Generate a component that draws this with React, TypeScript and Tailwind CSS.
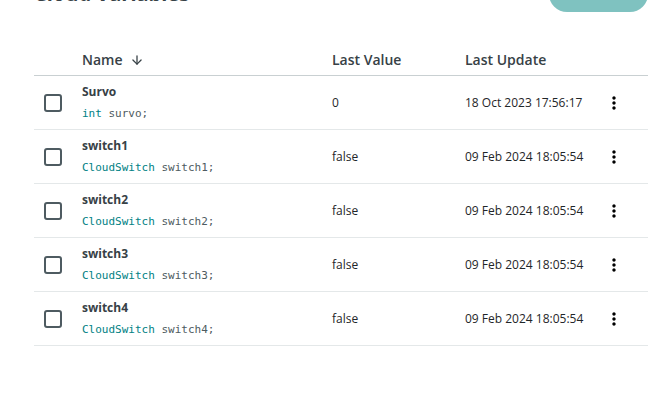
import { ArrowDown } from 'lucide-react';
import { MdMoreVert } from 'react-icons/md';

type Variable = {
  name: string;
  type: string;
  decl: string;
  value: string;
  updated: string;
};

const variables: Variable[] = [
  { name: 'Survo', type: 'int', decl: 'survo;', value: '0', updated: '18 Oct 2023 17:56:17' },
  { name: 'switch1', type: 'CloudSwitch', decl: 'switch1;', value: 'false', updated: '09 Feb 2024 18:05:54' },
  { name: 'switch2', type: 'CloudSwitch', decl: 'switch2;', value: 'false', updated: '09 Feb 2024 18:05:54' },
  { name: 'switch3', type: 'CloudSwitch', decl: 'switch3;', value: 'false', updated: '09 Feb 2024 18:05:54' },
  { name: 'switch4', type: 'CloudSwitch', decl: 'switch4;', value: 'false', updated: '09 Feb 2024 18:05:54' },
];

const cols = 'grid grid-cols-[48px_250px_133px_139px_1fr]';

export default function App() {
  return (
    <div className="min-h-[414px] overflow-hidden bg-white font-['Open_Sans',sans-serif] text-[#374146]">
      <div className="ml-[34px] mr-[13px] -mt-[24px]">
        <div className="flex h-9 items-center justify-between">
          <h1 className="text-[20px] font-bold text-[#374146]">Cloud Variables</h1>
          <button
            className="h-9 w-[99px] rounded-full bg-[#7fc2c0] text-sm font-bold uppercase tracking-wider text-white"
            type="button"
          >
            Add
          </button>
        </div>

        <div className={`${cols} mt-[32px] h-[32px] items-center border-b border-[#c9d0d2] text-[14px] font-semibold`}>
          <div />
          <div className="flex items-center gap-[7px]">
            Name
            <ArrowDown size={14} strokeWidth={2.2} />
          </div>
          <div>Last Value</div>
          <div>Last Update</div>
          <div />
        </div>

        {variables.map((v) => (
          <div key={v.name} className={`${cols} h-[54px] items-center border-b border-[#e4e8e9]`}>
            <div className="pl-[10px]">
              <div className="h-[18px] w-[18px] rounded-[3px] border-2 border-[#4e5b61]" />
            </div>
            <div className="flex flex-col gap-[6px]">
              <div className="text-[12px] font-bold leading-[16px] text-[#374146]">{v.name}</div>
              <div className="font-['DejaVu_Sans_Mono',monospace] text-[11px] leading-[16px] text-[#4e5b61]">
                <span className="text-[#008184]">{v.type}</span> {v.decl}
              </div>
            </div>
            <div className="text-[12px] text-[#1f2629]">{v.value}</div>
            <div className="text-[12px] text-[#1f2629]">{v.updated}</div>
            <div className="flex w-5 justify-center text-black">
              <MdMoreVert size={22} />
            </div>
          </div>
        ))}
      </div>
    </div>
  );
}
